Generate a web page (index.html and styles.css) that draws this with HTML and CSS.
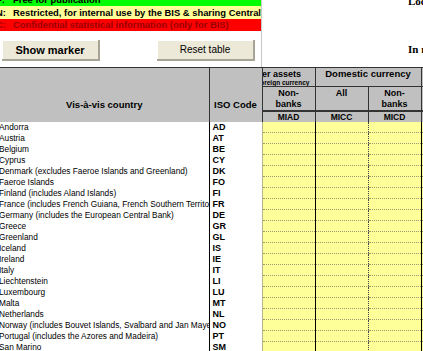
FILE: index.html
```html
<!DOCTYPE html>
<html lang="en">
<head>
    <meta charset="UTF-8">
    <meta name="viewport" content="width=device-width, initial-scale=1.0">
    <title>Vis-à-vis country positions</title>
    <link rel="stylesheet" href="styles.css">
</head>
<body>
    <div class="sheet-top">
        <div class="panel">
            <div class="band band-free"><span class="code">F:</span>Free for publication</div>
            <div class="band band-restricted"><span class="code">N:</span>Restricted, for internal use by the BIS &amp; sharing Central Banks</div>
            <div class="band band-confidential"><span class="code">C:</span>Confidential statistical information (only for BIS)</div>
            <div class="actions">
                <button type="button" class="btn btn-marker">Show marker</button>
                <button type="button" class="btn">Reset table</button>
            </div>
        </div>
        <div class="notes">
            <p class="note note-loc">Location</p>
            <p class="note note-unit">In millions</p>
        </div>
    </div>

    <table class="grid">
        <colgroup>
            <col class="c-country">
            <col class="c-iso">
            <col class="c-val">
            <col class="c-val">
            <col class="c-val">
            <col class="c-more">
        </colgroup>
        <thead>
            <tr class="h-group">
                <th class="h-country" rowspan="2">Vis-à-vis country</th>
                <th class="h-iso" rowspan="2">ISO Code</th>
                <th class="h-cut">
                    <div class="cut-main">Other assets</div>
                    <div class="cut-sub">in foreign currency</div>
                </th>
                <th class="h-dom" colspan="2">Domestic currency</th>
                <th class="h-more"></th>
            </tr>
            <tr class="h-sub">
                <th class="h-b1">Non-<br>banks</th>
                <th class="h-b2">All</th>
                <th class="h-b3">Non-<br>banks</th>
                <th class="h-more"></th>
            </tr>
            <tr class="h-codes">
                <th class="h-country"></th>
                <th class="h-iso"></th>
                <th class="h-b1">MIAD</th>
                <th class="h-b2">MICC</th>
                <th class="h-b3">MICD</th>
                <th class="h-more"></th>
            </tr>
        </thead>
        <tbody id="rows"></tbody>
    </table>

    <script>
        const countries = [
            ['Andorra', 'AD'],
            ['Austria', 'AT'],
            ['Belgium', 'BE'],
            ['Cyprus', 'CY'],
            ['Denmark (excludes Faeroe Islands and Greenland)', 'DK'],
            ['Faeroe Islands', 'FO'],
            ['Finland (includes Aland Islands)', 'FI'],
            ['France (includes French Guiana, French Southern Territories, Guadeloupe, Martinique, Mayotte, Monaco)', 'FR'],
            ['Germany (includes the European Central Bank)', 'DE'],
            ['Greece', 'GR'],
            ['Greenland', 'GL'],
            ['Iceland', 'IS'],
            ['Ireland', 'IE'],
            ['Italy', 'IT'],
            ['Liechtenstein', 'LI'],
            ['Luxembourg', 'LU'],
            ['Malta', 'MT'],
            ['Netherlands', 'NL'],
            ['Norway (includes Bouvet Islands, Svalbard and Jan Mayen Islands)', 'NO'],
            ['Portugal (includes the Azores and Madeira)', 'PT'],
            ['San Marino', 'SM'],
            ['Slovakia', 'SK']
        ];

        const body = document.getElementById('rows');
        countries.forEach(([name, iso]) => {
            const tr = document.createElement('tr');
            tr.innerHTML =
                `<td class="d-country"><div class="clip">${name}</div></td>` +
                `<td class="d-iso">${iso}</td>` +
                `<td class="d-val d-v1"></td>` +
                `<td class="d-val d-v2"></td>` +
                `<td class="d-val d-v3"></td>` +
                `<td class="d-val d-more"></td>`;
            body.appendChild(tr);
        });
    </script>
</body>
</html>
```

FILE: styles.css
```css
html, body {
    overflow: hidden;
}
body {
    margin: 0;
    background-color: white;
    font-family: "Liberation Sans", Arial, sans-serif;
    color: #000;
}
.sheet-top {
    display: flex;
    height: 67px;
}
.panel {
    width: 261px;
    flex: none;
    border-right: 1px solid #c8c8c8;
}
.band {
    height: 12px;
    line-height: 12px;
    font-size: 9.4px;
    font-weight: bold;
    white-space: nowrap;
    overflow: hidden;
    text-indent: -2px;
}
.band .code {
    display: inline-block;
    width: 15px;
}
.band-free {
    margin-top: -6px;
    background-color: #00ff00;
}
.band-restricted {
    height: 13px;
    line-height: 13px;
    background-color: #ffff99;
}
.band-confidential {
    background-color: #ff0000;
    color: #9a0000;
}
.actions {
    display: flex;
    justify-content: space-between;
    padding: 9px 6px 0 2px;
}
.btn {
    width: 98px;
    height: 21px;
    padding: 0;
    background-color: #ece9d8;
    border: none;
    border-right: 2px solid #a7a496;
    border-bottom: 2px solid #a7a496;
    box-shadow: inset 1px 1px 0 #fff;
    font-family: "Liberation Sans", Arial, sans-serif;
    font-size: 10px;
    color: #000;
}
.btn-marker {
    font-weight: bold;
    font-size: 11px;
}
.notes {
    flex: 1;
    padding-left: 146px;
    overflow: hidden;
    white-space: nowrap;
}
.note {
    margin: 0;
    font-family: "Liberation Serif", "Times New Roman", serif;
    font-weight: bold;
    font-size: 11px;
    line-height: 12px;
}
.note-loc {
    margin-top: -5px;
}
.note-unit {
    margin-top: 36px;
}

.grid {
    border-collapse: collapse;
    table-layout: fixed;
    width: 441px;
    font-size: 8.3px;
}
.c-country { width: 209px; }
.c-iso { width: 53px; }
.c-val { width: 53px; }
.c-more { width: 20px; }

.grid th {
    background-color: #c0c0c0;
    padding: 0;
    font-weight: bold;
    border-left: 1px solid #333;
    border-right: 1px solid #333;
}
.grid th.h-country {
    border-left: none;
}
.h-group th {
    border-top: 1px solid #333;
    height: 18px;
    vertical-align: top;
}
.h-group .h-country, .h-group .h-iso {
    vertical-align: bottom;
    padding-bottom: 1px;
}
.h-country {
    font-size: 9.5px;
}
.h-iso {
    font-size: 9.5px;
}
.h-cut {
    text-align: left;
    white-space: nowrap;
    overflow: hidden;
    border-bottom: 1px solid #333;
}
.cut-main {
    font-size: 9px;
    line-height: 10px;
    padding-top: 1px;
    text-indent: -16px;
}
.cut-sub {
    font-size: 6.5px;
    line-height: 7px;
    text-decoration: underline;
    text-indent: -12px;
}
.h-dom {
    font-size: 9.5px;
    line-height: 12px;
    padding-top: 1px;
    border-bottom: 1px solid #333;
}
.h-group .h-more {
    border-bottom: 1px solid #333;
}
.h-sub th {
    height: 22px;
    vertical-align: top;
    font-size: 9px;
    line-height: 11px;
    padding-top: 1px;
    border-bottom: 2px solid #333;
}
.grid th.h-b3 {
    border-left: 1px solid #777;
}
.h-codes th {
    height: 10px;
    line-height: 10px;
    font-size: 8.5px;
}

.grid td {
    height: 10px;
    padding: 0;
    line-height: 10px;
}
.d-country {
    border-right: 1px solid #000;
}
.clip {
    white-space: nowrap;
    overflow: hidden;
    text-indent: -1px;
}
.grid td.d-iso {
    font-weight: bold;
    font-size: 9px;
    padding-left: 3px;
}
.d-val {
    background-color: #ffff99;
    border-bottom: 1px dotted #9a9a70;
}
.d-v1 {
    border-left: 1px solid #b5b58a;
}
.d-v2 {
    border-left: 1px solid #000;
}
.d-v3 {
    border-left: 1px dotted #444;
}
.d-more {
    border-left: 1px solid #000;
}
```
